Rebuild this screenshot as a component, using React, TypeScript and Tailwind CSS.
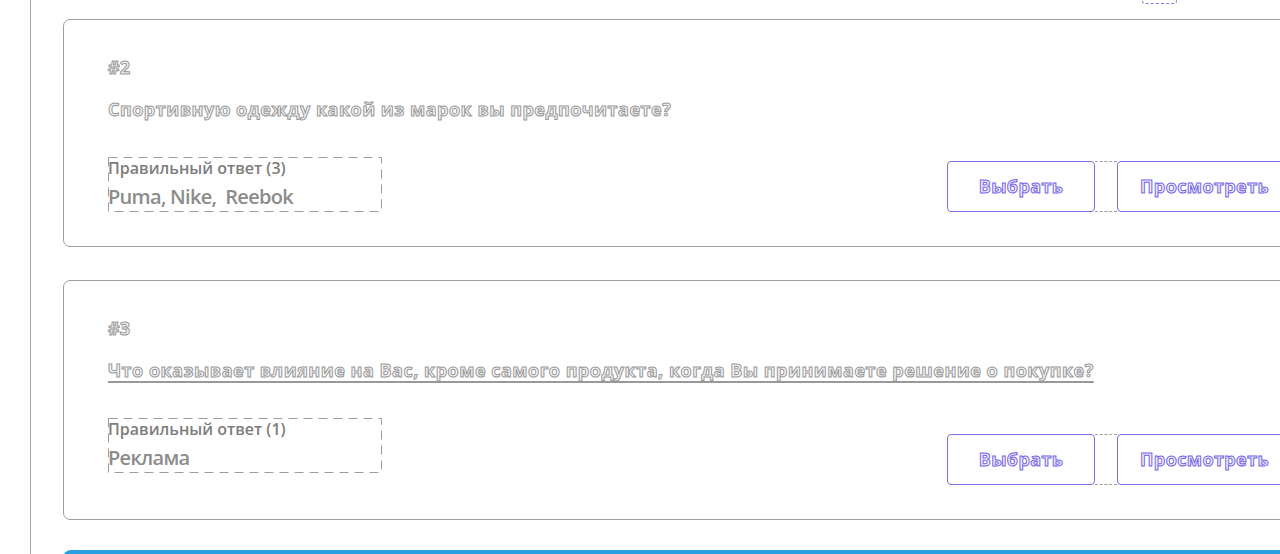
import React from "react";

function DashedBox({ label, value }: { label: string; value: string }) {
  return (
    <div className="relative w-[274px] h-[55px] pt-[1px] shrink-0">
      <svg className="absolute inset-0 pointer-events-none" width="274" height="55">
        <rect x="0.5" y="0.5" width="273" height="54" fill="none" stroke="#9c9c9c" strokeWidth="1" strokeDasharray="9 6" />
      </svg>
      <div className="text-[16px] leading-[20px] font-semibold text-[#7d7d7d]">{label}</div>
      <div className="mt-[5px] text-[20px] leading-[28px] font-semibold text-[#8c8c8c] tracking-[-0.7px] whitespace-pre">{value}</div>
    </div>
  );
}

function Buttons({ top }: { top: string }) {
  return (
    <div className={`flex ${top}`}>
      <div className="w-[148px] h-[51px] rounded-[4px] border-[1.5px] border-[#7c6ee6] flex items-center justify-center text-[18px] font-bold tracking-[0.4px] text-[#f0eeff] [-webkit-text-stroke:1px_#7466e4]">
        Выбрать
      </div>
      <div className="w-[22px] h-[51px] border-y border-dashed border-[#9f9f9f]" />
      <div className="w-[175px] h-[51px] rounded-[4px] border-[1.5px] border-[#7c6ee6] flex items-center justify-center text-[18px] font-bold tracking-[0.4px] text-[#f0eeff] [-webkit-text-stroke:1px_#7466e4]">
        Просмотреть
      </div>
    </div>
  );
}

function Card({
  num,
  question,
  underline,
  label,
  value,
  btnTop,
  className,
}: {
  num: string;
  question: string;
  underline?: boolean;
  label: string;
  value: string;
  btnTop: string;
  className?: string;
}) {
  return (
    <div className={`w-[1274px] rounded-[7px] border border-[#9e9e9e] pl-[44px] pr-[44px] pt-[34px] pb-[34px] ${className ?? ""}`}>
      <div className="text-[18px] leading-[27px] font-bold text-[#f6f6f6] [-webkit-text-stroke:1px_#989898]">{num}</div>
      <div
        className={`mt-[15px] text-[18px] leading-[27px] font-bold tracking-[0.5px] text-[#f6f6f6] [-webkit-text-stroke:1px_#989898] ${
          underline ? "underline decoration-[#999999] decoration-[2px] underline-offset-[4px]" : ""
        }`}
      >
        {question}
      </div>
      <div className="flex justify-between items-start">
        <div className="mt-[34px]">
          <DashedBox label={label} value={value} />
        </div>
        <Buttons top={btnTop} />
      </div>
    </div>
  );
}

export default function App() {
  return (
    <div className="relative h-[554px] w-[1280px] overflow-hidden bg-white font-['Open_Sans',sans-serif]">
      <div className="absolute left-[1142px] top-[-10px] w-[35px] h-[14px] rounded-[3px] border-[1.5px] border-dashed border-[#8a7fe0]" />
      <div className="ml-[30px] h-full border-l border-[#a8a8a8] pl-[32px] pt-[19px]">
        <Card
          num="#2"
          question="Спортивную одежду какой из марок вы предпочитаете?"
          label="Правильный ответ (3)"
          value="Puma, Nike,  Reebok"
          btnTop="mt-[38px]"
        />
        <Card
          className="mt-[33px]"
          num="#3"
          question="Что оказывает влияние на Вас, кроме самого продукта, когда Вы принимаете решение о покупке?"
          underline
          label="Правильный ответ (1)"
          value="Реклама"
          btnTop="mt-[50px]"
        />
        <div className="mt-[30px] w-[1274px] h-[30px] rounded-t-[8px] bg-[#2a9fe0]" />
      </div>
    </div>
  );
}
